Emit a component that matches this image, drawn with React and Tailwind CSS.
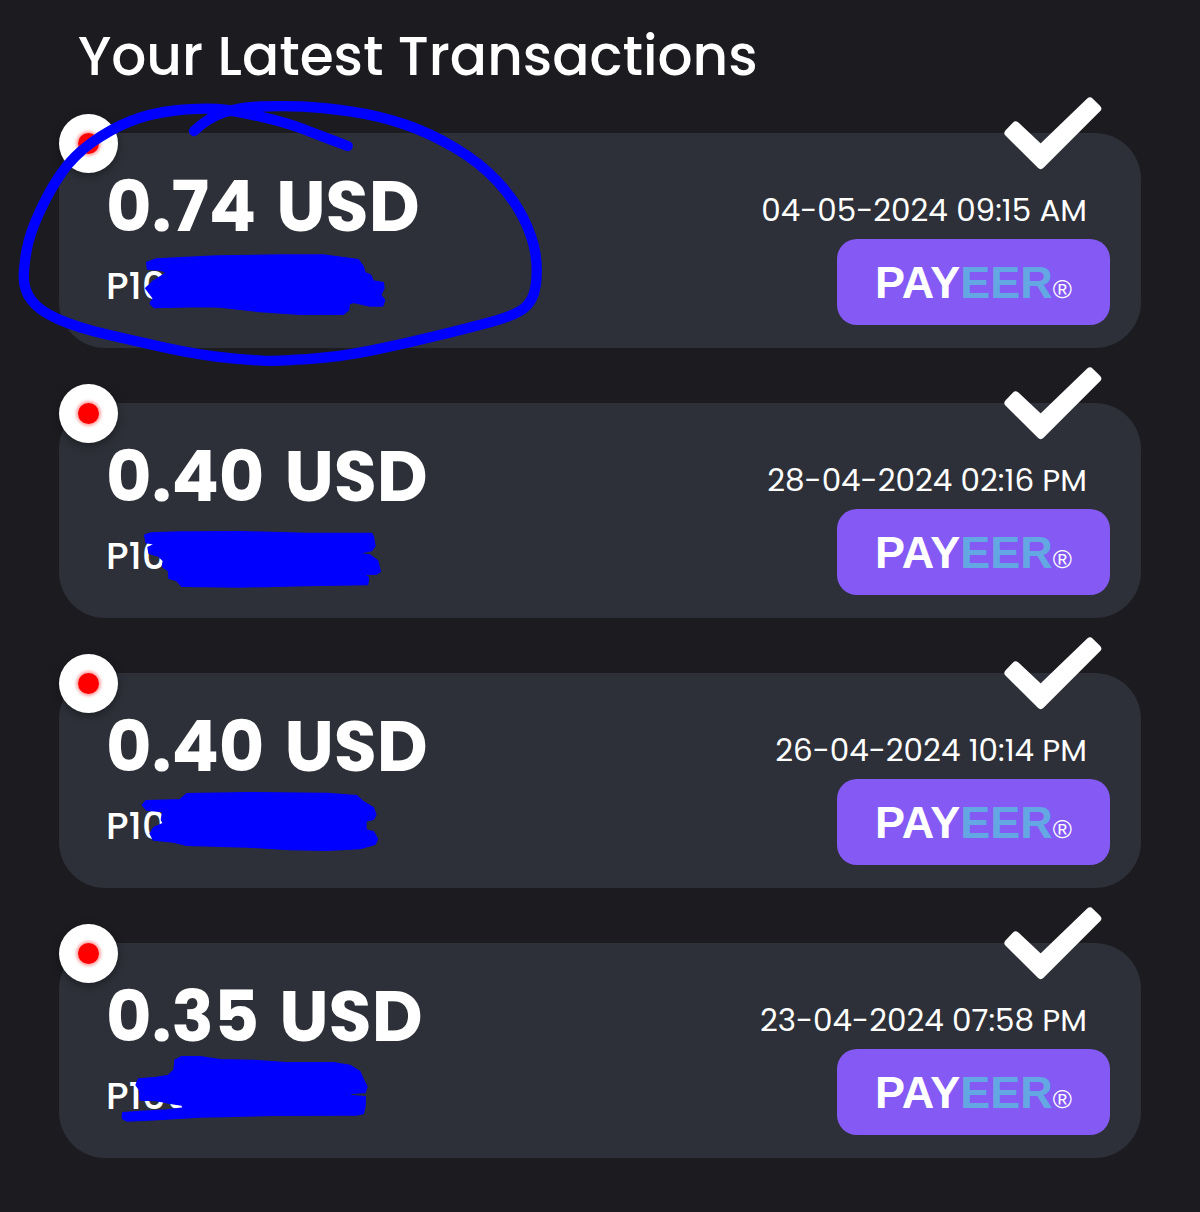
const transactions = [
  {
    amount: '0.74',
    account: 'P10',
    date: '04-05-2024 09:15 AM',
    scribble:
      'M320 487L350 477L530 468L720 465L850 465L955 479L970 500L975 518L992 525L1000 543L1030 548L1032 565L1022 585L1034 600L1028 618L990 618L940 607L928 612L926 630L910 643L780 643L660 635L540 621L480 620L342 623L330 610L340 595L317 565L340 543L380 518L360 510L322 507Z',
    circled: true,
  },
  {
    amount: '0.40',
    account: 'P10',
    date: '28-04-2024 02:16 PM',
    scribble:
      'M314 495L330 489L420 486L600 485L800 490L995 490L1000 500L1005 528L995 542L965 548L965 552L990 555L1013 572L1021 605L1010 612L970 614L986 622L983 644L800 647L600 651L425 649L410 632L387 625L385 602L367 590L370 572L355 558L327 550L324 532L345 522L318 518Z',
  },
  {
    amount: '0.40',
    account: 'P10',
    date: '26-04-2024 10:14 PM',
    scribble:
      'M307 495L318 482L420 479L440 461L620 458L860 460L950 467L970 485L1000 503L1008 525L1000 538L978 543L978 570L1000 575L1013 597L1005 613L960 626L860 631L750 629L620 621L440 616L400 606L340 600L330 580L342 562L370 550L364 540L368 515L320 510Z',
  },
  {
    amount: '0.35',
    account: 'P100',
    date: '23-04-2024 07:58 PM',
    scribble:
      'M288 525L295 507L350 502L385 496L402 480L405 450L425 440L480 440L540 449L640 451L740 458L880 458L930 466L960 485L973 515L981 530L975 548L932 550L932 556L976 560L975 590L970 611L950 615L700 616L480 621L330 630L260 633L247 625L248 608L290 605L380 600L430 594L425 585L390 580L350 572L300 570L298 540Z',
  },
]

const CIRCLE_POINTS = [
  [462, 93], [505, 52], [600, 22], [720, 17], [850, 22], [1020, 48], [1170, 99],
  [1320, 188], [1422, 298], [1478, 410], [1494, 510], [1480, 605], [1420, 648],
  [1280, 685], [1100, 730], [900, 771], [720, 782], [660, 783], [480, 766],
  [280, 722], [110, 682], [-3, 632], [-48, 570], [-49, 500], [-31, 400],
  [30, 268], [100, 168], [210, 88], [330, 40], [480, 23], [580, 31], [740, 68],
  [830, 103], [923, 138],
]

// quadratic curve through the midpoints of the given points
function smoothPath(points) {
  const [first, ...rest] = points
  let d = `M${first[0]} ${first[1]}`
  for (let i = 0; i < rest.length - 1; i++) {
    const [x, y] = rest[i]
    const [nx, ny] = rest[i + 1]
    d += `Q${x} ${y} ${(x + nx) / 2} ${(y + ny) / 2}`
  }
  const last = rest[rest.length - 1]
  return `${d}L${last[0]} ${last[1]}`
}

function CheckMark() {
  return (
    <svg
      viewBox="0 0 98 73"
      className="absolute -top-9 right-[39px] w-[98px] h-[73px]"
      role="img"
      aria-label="Completed"
    >
      <path
        d="M4.5 36L11.7 28.5L36.7 52L86 4.5L93.2 11.5L36.7 68Z"
        fill="#fff"
        stroke="#fff"
        strokeWidth="8"
        strokeLinejoin="round"
      />
    </svg>
  )
}

function StatusDot() {
  return (
    <span className="absolute left-0 -top-[19px] w-[59px] h-[59px] rounded-full bg-white flex items-center justify-center shadow-[0_3px_8px_rgba(0,0,0,0.35)]">
      <span className="w-[21px] h-[21px] rounded-full bg-[#fe0000] shadow-[0_0_3px_2px_rgba(255,0,0,0.35)]" />
    </span>
  )
}

function Marker({ scribble, circled }) {
  return (
    <svg
      viewBox="57 99 1200 780"
      className="absolute left-0 top-0 w-[400px] h-[260px] overflow-visible pointer-events-none"
      aria-hidden="true"
    >
      <path d={scribble} fill="#0000ff" stroke="#0000ff" strokeWidth="4" strokeLinejoin="round" />
      {circled && (
        <path
          d={smoothPath(CIRCLE_POINTS)}
          fill="none"
          stroke="#0000ff"
          strokeWidth="31"
          strokeLinecap="round"
          strokeLinejoin="round"
        />
      )}
    </svg>
  )
}

function PayeerBadge() {
  return (
    <div className="w-[273px] h-[86px] rounded-[20px] bg-[#8459f4] flex items-center justify-center font-['Liberation_Sans',Arial,sans-serif] text-white">
      <span className="flex items-baseline">
        <span className="text-[45px] leading-none font-bold">
          PAY<span className="text-[#64a8e3]">EER</span>
        </span>
        <span className="text-[26px] leading-none">®</span>
      </span>
    </div>
  )
}

function TransactionCard({ amount, account, date, scribble, circled }) {
  return (
    <li className="relative min-h-[215px] rounded-[46px] bg-[#2d3038] pl-[47px] pr-[31px] flex justify-between">
      <div className="pt-[34px]">
        <p className="flex gap-5 text-[70px] leading-[80px] font-bold">
          <span>{amount}</span>
          <span>USD</span>
        </p>
        <p className="mt-[15px] text-[38px] leading-12 font-medium">{account}</p>
      </div>
      <div className="pt-[57px] flex flex-col items-end">
        <p className="pr-[23px] text-[31px] leading-10">{date}</p>
        <div className="mt-[9px]">
          <PayeerBadge />
        </div>
      </div>
      <StatusDot />
      <CheckMark />
      <Marker scribble={scribble} circled={circled} />
    </li>
  )
}

export default function App() {
  return (
    <main className="min-h-screen bg-[#1c1b20] text-white px-[59px] pt-5 pb-[54px] overflow-hidden font-[Poppins,Inter,sans-serif]">
      <h1 className="pl-[19px] text-[55px] leading-[72px] font-medium">Your Latest Transactions</h1>
      <ul className="mt-[41px] flex flex-col gap-[55px]">
        {transactions.map((tx) => (
          <TransactionCard key={tx.date} {...tx} />
        ))}
      </ul>
    </main>
  )
}
